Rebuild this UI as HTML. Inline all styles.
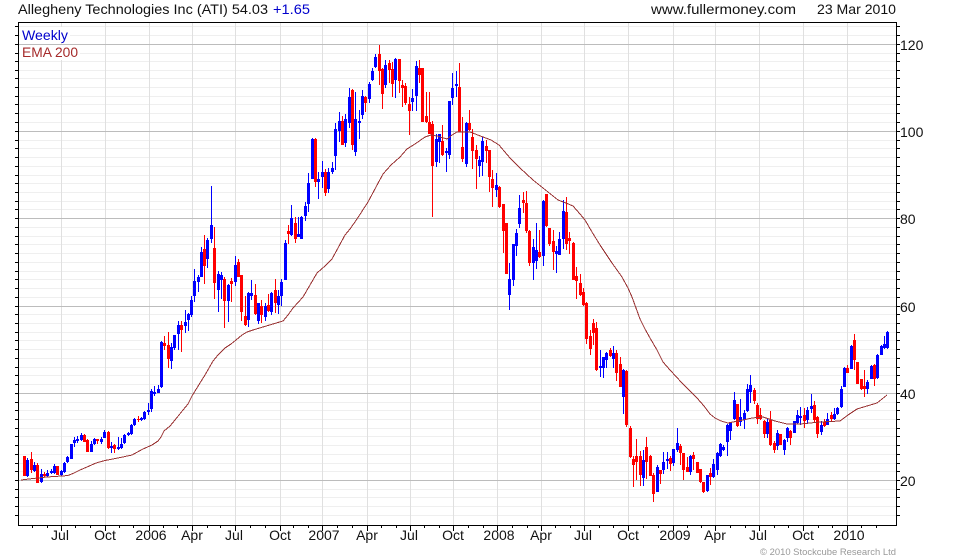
<!DOCTYPE html>
<html><head><meta charset="utf-8"><title>ATI chart</title>
<style>
html,body{margin:0;padding:0;background:#fff;width:980px;height:560px;overflow:hidden}
svg{display:block}
text{font-family:"Liberation Sans",Arial,sans-serif;font-size:14px;fill:#111}
</style></head><body>
<svg width="980" height="560" viewBox="0 0 980 560" xmlns="http://www.w3.org/2000/svg">
<g shape-rendering="crispEdges" fill="none">
<path stroke="#efefef" d="M19 26.5H896M19 35.5H896M19 53.5H896M19 61.5H896M19 70.5H896M19 78.5H896M19 87.5H896M19 96.5H896M19 104.5H896M19 113.5H896M19 122.5H896M19 140.5H896M19 148.5H896M19 157.5H896M19 166.5H896M19 175.5H896M19 183.5H896M19 192.5H896M19 201.5H896M19 209.5H896M19 227.5H896M19 236.5H896M19 244.5H896M19 253.5H896M19 262.5H896M19 271.5H896M19 279.5H896M19 288.5H896M19 297.5H896M19 314.5H896M19 323.5H896M19 332.5H896M19 340.5H896M19 349.5H896M19 358.5H896M19 367.5H896M19 375.5H896M19 384.5H896M19 402.5H896M19 410.5H896M19 419.5H896M19 428.5H896M19 436.5H896M19 445.5H896M19 454.5H896M19 463.5H896M19 471.5H896M19 489.5H896M19 497.5H896M19 506.5H896M19 515.5H896"/>
<path stroke="#e0e0e0" d="M61.5 23V525M105.5 23V525M149.5 23V525M192.5 23V525M235.5 23V525M280.5 23V525M322.5 23V525M367.5 23V525M410.5 23V525M453.5 23V525M497.5 23V525M541.5 23V525M584.5 23V525M628.5 23V525M673.5 23V525M715.5 23V525M759.5 23V525M803.5 23V525M847.5 23V525"/>
<path stroke="#bcbcbc" d="M19 44.5H896M19 131.5H896M19 218.5H896M19 306.5H896M19 393.5H896M19 480.5H896"/>
</g>
<rect x="20" y="27" width="50" height="16" fill="#fff"/>
<rect x="20" y="45" width="60" height="15" fill="#fff"/>

<g fill="none" shape-rendering="crispEdges">
<path stroke="#0000ff" stroke-width="1" d="M27.5 458V477M34.5 462V472M41.5 469V483M47.5 470V477M51.5 469V474M54.5 464V474M61.5 470V476M64.5 462V473M67.5 456V463M71.5 444V459M74.5 437V447M77.5 436V443M81.5 433V441M91.5 441V452M94.5 438V445M101.5 437V444M104.5 430V438M111.5 442V453M118.5 437V450M121.5 438V449M124.5 434V444M128.5 432V436M131.5 424V435M134.5 418V426M141.5 417V421M144.5 411V420M148.5 403V415M151.5 389V412M154.5 386V396M158.5 385V393M161.5 341V388M171.5 343V369M174.5 335V350M178.5 321V350M185.5 310V333M188.5 313V331M191.5 296V317M194.5 269V302M198.5 275V292M201.5 247V277M207.5 238V268M211.5 186V243M218.5 271V312M221.5 272V299M228.5 284V322M235.5 256V286M248.5 292V327M251.5 280V300M258.5 303V324M265.5 303V321M271.5 292V315M278.5 290V314M281.5 279V306M285.5 240V280M291.5 205V236M298.5 217V237M301.5 216V239M305.5 202V221M308.5 173V212M312.5 138V179M318.5 172V199M322.5 161V188M328.5 168V193M332.5 162V174M335.5 123V170M339.5 112V142M345.5 114V147M349.5 88V128M355.5 92V156M359.5 110V139M362.5 90V119M369.5 82V103M372.5 68V81M375.5 54V68M385.5 60V88M395.5 58V98M412.5 89V111M416.5 61V111M436.5 134V167M439.5 134V163M446.5 148V172M449.5 101V159M452.5 73V105M456.5 71V97M466.5 122V167M479.5 156V177M482.5 137V176M496.5 173V197M509.5 263V310M513.5 244V286M516.5 229V256M519.5 195V228M533.5 239V280M536.5 223V269M543.5 200V266M556.5 246V273M559.5 232V255M563.5 200V249M600.5 350V377M603.5 357V378M606.5 352V368M613.5 346V368M623.5 369V414M643.5 450V486M657.5 465V492M663.5 452V474M667.5 452V469M673.5 449V466M677.5 428V452M690.5 455V475M707.5 475V492M713.5 459V478M717.5 452V475M720.5 443V457M723.5 445V451M727.5 424V456M730.5 422V440M734.5 392V420M740.5 399V426M744.5 410V429M747.5 384V412M750.5 375V403M767.5 418V438M777.5 430V450M784.5 439V455M787.5 427V442M794.5 421V433M797.5 410V424M800.5 407V425M807.5 407V424M811.5 394V413M821.5 421V435M827.5 413V425M834.5 408V420M837.5 407V415M841.5 386V408M844.5 367V387M851.5 345V369M867.5 380V394M871.5 365V379M877.5 354V379M881.5 345V355M884.5 336V349M887.5 331V349"/>
<path stroke="#0000ff" stroke-width="3" d="M27.5 460V476M34.5 465V471M41.5 474V482M47.5 473V476M51.5 471V473M54.5 466V473M61.5 471V475M64.5 463V472M67.5 457V462M71.5 444V459M74.5 440V443M77.5 439V441M81.5 435V440M91.5 444V452M94.5 439V444M101.5 439V442M104.5 432V438M111.5 446V448M118.5 447V449M121.5 444V448M124.5 435V443M128.5 433V435M131.5 425V434M134.5 419V425M141.5 418V420M144.5 412V419M148.5 410V412M151.5 391V409M154.5 392V394M158.5 389V393M161.5 342V387M171.5 347V361M174.5 335V348M178.5 325V334M185.5 322V326M188.5 314V320M191.5 300V315M194.5 281V296M198.5 277V282M201.5 252V277M207.5 240V259M211.5 225V239M218.5 274V290M221.5 275V280M228.5 285V301M235.5 265V282M248.5 293V320M251.5 293V296M258.5 303V321M265.5 306V317M271.5 293V312M278.5 296V305M281.5 282V296M285.5 243V280M291.5 218V235M298.5 234V237M301.5 217V239M305.5 206V216M308.5 183V204M312.5 139V179M318.5 179V182M322.5 172V177M328.5 172V189M332.5 168V172M335.5 129V156M339.5 121V131M345.5 119V143M349.5 97V123M355.5 119V152M359.5 121V123M362.5 96V115M369.5 84V99M372.5 71V80M375.5 57V67M385.5 65V85M395.5 59V80M412.5 98V102M416.5 66V96M436.5 139V162M439.5 134V142M446.5 151V153M449.5 101V155M452.5 88V98M456.5 84V86M466.5 123V164M479.5 160V166M482.5 141V162M496.5 185V190M509.5 279V295M513.5 244V280M516.5 233V246M519.5 208V224M533.5 247V263M536.5 250V261M543.5 201V256M556.5 251V254M559.5 239V255M563.5 211V239M600.5 366V368M603.5 357V368M606.5 353V360M613.5 353V359M623.5 370V397M643.5 460V478M657.5 467V492M663.5 462V470M667.5 459V461M673.5 449V463M677.5 443V450M690.5 456V472M707.5 475V491M713.5 464V477M717.5 453V470M720.5 444V456M723.5 447V450M727.5 425V442M730.5 422V431M734.5 400V419M740.5 417V422M744.5 413V420M747.5 389V411M750.5 385V392M767.5 422V434M777.5 433V446M784.5 440V450M787.5 428V438M794.5 421V433M797.5 415V423M800.5 416V418M807.5 410V420M811.5 406V409M821.5 425V432M827.5 419V425M834.5 414V419M837.5 408V414M841.5 389V407M844.5 368V387M851.5 346V369M867.5 382V389M871.5 366V379M877.5 355V378M881.5 346V355M884.5 344V348M887.5 332V348"/>
<path stroke="#ff0000" stroke-width="1" d="M24.5 456V476M31.5 452V473M37.5 463V483M44.5 472V477M57.5 466V475M84.5 434V442M87.5 439V452M97.5 439V444M108.5 431V449M114.5 444V453M138.5 416V422M164.5 336V350M168.5 332V368M181.5 321V352M204.5 235V284M214.5 227V299M224.5 277V328M231.5 278V302M238.5 259V277M241.5 275V321M245.5 296V326M255.5 284V315M261.5 300V323M268.5 294V312M275.5 279V313M288.5 225V244M295.5 217V243M315.5 138V187M325.5 169V196M342.5 116V145M352.5 89V150M365.5 96V112M379.5 45V85M382.5 68V109M389.5 60V83M392.5 62V97M399.5 59V93M402.5 80V107M405.5 83V105M409.5 97V135M419.5 60V83M422.5 68V122M426.5 92V123M429.5 92V134M432.5 121V217M442.5 125V156M459.5 63V132M462.5 117V162M469.5 110V131M472.5 129V169M476.5 145V189M486.5 140V163M489.5 150V192M492.5 170V207M499.5 186V208M503.5 204V253M506.5 223V274M523.5 192V213M526.5 191V233M529.5 230V266M539.5 230V258M546.5 194V227M549.5 228V246M553.5 230V270M566.5 197V250M569.5 232V254M573.5 242V280M576.5 267V299M580.5 274V296M583.5 288V306M586.5 302V344M590.5 330V355M593.5 319V345M596.5 322V371M610.5 348V357M616.5 350V381M620.5 357V387M626.5 370V427M630.5 426V458M633.5 456V487M636.5 439V480M640.5 451V486M646.5 437V479M650.5 455V476M653.5 473V502M660.5 470V484M670.5 456V471M680.5 444V465M683.5 453V480M687.5 457V472M693.5 452V470M697.5 462V473M700.5 469V483M703.5 482V493M710.5 468V485M737.5 404V427M754.5 388V404M757.5 403V424M760.5 408V420M764.5 420V438M770.5 411V446M774.5 441V453M780.5 434V445M790.5 430V445M804.5 408V428M814.5 401V423M817.5 416V438M824.5 419V427M831.5 412V421M847.5 365V373M854.5 334V370M857.5 362V384M861.5 379V390M864.5 370V397M874.5 364V386"/>
<path stroke="#ff0000" stroke-width="3" d="M24.5 456V476M31.5 459V470M37.5 465V483M44.5 474V476M57.5 466V475M84.5 435V442M87.5 440V452M97.5 439V441M108.5 432V448M114.5 445V449M138.5 419V420M164.5 343V346M168.5 345V359M181.5 325V330M204.5 249V266M214.5 248V283M224.5 279V301M231.5 281V284M238.5 262V277M241.5 275V312M245.5 316V325M255.5 295V314M261.5 306V315M268.5 305V311M275.5 290V303M288.5 231V234M295.5 223V239M315.5 139V182M325.5 172V193M342.5 121V145M352.5 90V145M365.5 97V103M379.5 54V71M382.5 69V94M389.5 63V70M392.5 69V84M399.5 59V81M402.5 85V88M405.5 86V103M409.5 104V111M419.5 68V75M422.5 68V122M426.5 116V122M429.5 122V134M432.5 124V166M442.5 141V155M459.5 87V132M462.5 147V159M469.5 123V130M472.5 137V151M476.5 150V159M486.5 146V151M489.5 150V177M492.5 179V188M499.5 187V207M503.5 204V231M506.5 223V274M523.5 200V203M526.5 203V231M529.5 231V263M539.5 252V257M546.5 194V226M549.5 228V244M553.5 241V252M566.5 212V244M569.5 238V241M573.5 243V280M576.5 276V281M580.5 283V295M583.5 292V305M586.5 303V339M590.5 336V349M593.5 323V333M596.5 328V370M610.5 350V356M616.5 353V373M620.5 364V387M626.5 371V425M630.5 428V457M633.5 459V465M636.5 456V462M640.5 456V475M646.5 447V462M650.5 456V476M653.5 475V494M660.5 470V474M670.5 458V464M680.5 446V453M683.5 453V470M687.5 467V472M693.5 455V459M697.5 462V473M700.5 469V482M703.5 482V492M710.5 473V477M737.5 404V426M754.5 390V401M757.5 405V419M760.5 415V419M764.5 421V434M770.5 420V445M774.5 443V450M780.5 434V445M790.5 431V438M804.5 415V421M814.5 405V420M817.5 417V434M824.5 422V426M831.5 415V419M847.5 368V373M854.5 340V360M857.5 362V384M861.5 379V389M864.5 386V389M874.5 365V379"/>
</g>

<polyline fill="none" stroke="#993333" stroke-width="1" shape-rendering="crispEdges" points="21,480 33,478.5 47,477 62,476 68,475.5 74,473 80,470 87,467 96,463 105,460.5 118,458 132,455 143,449 152,445 158,441 161,437 164,431 170,426 175,420 183,410 188,404 192,396 200,383 205,375 209,368 213,361 218,355 222,351 225,348 231,344 236,340 242,335 247,332 253,330 263,327 273,324 283,321 288,315 293,308 303,297 310,285 317,273 325,266 332,259 338,248 345,235 350,229 357,219 368,202 376,187 383,174 391,165 400,157 407,149 415,144 425,137 431,135 437,136 447,139 452,135 457,132 470,132 483,137 491,140 499,145 510,158 520,168 533,180 543,188 558,200 566,203 573,206 580,214 585,220 592,232 600,245 612,263 622,277 628,288 632,297 636,308 640,319 645,329 650,338 657,350 663,362 670,370 682,383 692,393 697,398 704,406 710,414 715,418 721,421 728,423 743,420 752,418 763,417 775,421 787,424 800,424 820,422 840,421 848,415 857,409 867,406 877,403 882,399 887,395"/>

<g fill="none" stroke="#000" shape-rendering="crispEdges">
<path d="M18.5 23V526M896.5 23V526M18 22.5H897M18 525.5H897"/>
<path d="M15 26.5H18M15 35.5H18M15 44.5H18M15 53.5H18M15 61.5H18M15 70.5H18M15 78.5H18M15 87.5H18M15 96.5H18M15 104.5H18M15 113.5H18M15 122.5H18M15 131.5H18M15 140.5H18M15 148.5H18M15 157.5H18M15 166.5H18M15 175.5H18M15 183.5H18M15 192.5H18M15 201.5H18M15 209.5H18M15 218.5H18M15 227.5H18M15 236.5H18M15 244.5H18M15 253.5H18M15 262.5H18M15 271.5H18M15 279.5H18M15 288.5H18M15 297.5H18M15 306.5H18M15 314.5H18M15 323.5H18M15 332.5H18M15 340.5H18M15 349.5H18M15 358.5H18M15 367.5H18M15 375.5H18M15 384.5H18M15 393.5H18M15 402.5H18M15 410.5H18M15 419.5H18M15 428.5H18M15 436.5H18M15 445.5H18M15 454.5H18M15 463.5H18M15 471.5H18M15 480.5H18M15 489.5H18M15 497.5H18M15 506.5H18M15 515.5H18"/>
<path d="M897 26.5H900M897 35.5H900M897 44.5H900M897 53.5H900M897 61.5H900M897 70.5H900M897 78.5H900M897 87.5H900M897 96.5H900M897 104.5H900M897 113.5H900M897 122.5H900M897 131.5H900M897 140.5H900M897 148.5H900M897 157.5H900M897 166.5H900M897 175.5H900M897 183.5H900M897 192.5H900M897 201.5H900M897 209.5H900M897 218.5H900M897 227.5H900M897 236.5H900M897 244.5H900M897 253.5H900M897 262.5H900M897 271.5H900M897 279.5H900M897 288.5H900M897 297.5H900M897 306.5H900M897 314.5H900M897 323.5H900M897 332.5H900M897 340.5H900M897 349.5H900M897 358.5H900M897 367.5H900M897 375.5H900M897 384.5H900M897 393.5H900M897 402.5H900M897 410.5H900M897 419.5H900M897 428.5H900M897 436.5H900M897 445.5H900M897 454.5H900M897 463.5H900M897 471.5H900M897 480.5H900M897 489.5H900M897 497.5H900M897 506.5H900M897 515.5H900"/>
<path d="M61.5 526V531M105.5 526V531M149.5 526V531M192.5 526V531M235.5 526V531M280.5 526V531M322.5 526V531M367.5 526V531M410.5 526V531M453.5 526V531M497.5 526V531M541.5 526V531M584.5 526V531M628.5 526V531M673.5 526V531M715.5 526V531M759.5 526V531M803.5 526V531M847.5 526V531"/>
<path d="M32.5 526V528M47.5 526V528M75.5 526V528M90.5 526V528M119.5 526V528M133.5 526V528M163.5 526V528M177.5 526V528M207.5 526V528M220.5 526V528M250.5 526V528M265.5 526V528M293.5 526V528M308.5 526V528M337.5 526V528M352.5 526V528M381.5 526V528M396.5 526V528M424.5 526V528M439.5 526V528M468.5 526V528M483.5 526V528M512.5 526V528M527.5 526V528M555.5 526V528M570.5 526V528M599.5 526V528M613.5 526V528M643.5 526V528M658.5 526V528M687.5 526V528M701.5 526V528M730.5 526V528M745.5 526V528M774.5 526V528M788.5 526V528M818.5 526V528M832.5 526V528M861.5 526V528M876.5 526V528"/>
</g>

<text x="18" y="14" textLength="250" lengthAdjust="spacingAndGlyphs">Allegheny Technologies Inc (ATI) 54.03</text>
<text x="273" y="14" textLength="37" lengthAdjust="spacingAndGlyphs" style="fill:#0000cc">+1.65</text>
<text x="651" y="14" textLength="145" lengthAdjust="spacingAndGlyphs">www.fullermoney.com</text>
<text x="817" y="14" textLength="79" lengthAdjust="spacingAndGlyphs">23 Mar 2010</text>
<text x="22" y="40" textLength="46" lengthAdjust="spacingAndGlyphs" style="fill:#0000cc">Weekly</text>
<text x="22" y="57" textLength="56" lengthAdjust="spacingAndGlyphs" style="fill:#a52a2a">EMA 200</text>

<text x="900" y="50">120</text>
<text x="900" y="137">100</text>
<text x="900" y="224">80</text>
<text x="900" y="312">60</text>
<text x="900" y="399">40</text>
<text x="900" y="486">20</text>

<g text-anchor="middle">
<text x="60" y="540">Jul</text>
<text x="105" y="540">Oct</text>
<text x="151" y="540">2006</text>
<text x="192" y="540">Apr</text>
<text x="234" y="540">Jul</text>
<text x="280" y="540">Oct</text>
<text x="324" y="540">2007</text>
<text x="367" y="540">Apr</text>
<text x="409" y="540">Jul</text>
<text x="453" y="540">Oct</text>
<text x="499" y="540">2008</text>
<text x="541" y="540">Apr</text>
<text x="583" y="540">Jul</text>
<text x="628" y="540">Oct</text>
<text x="675" y="540">2009</text>
<text x="715" y="540">Apr</text>
<text x="758" y="540">Jul</text>
<text x="803" y="540">Oct</text>
<text x="849" y="540">2010</text>
</g>
<text x="760" y="555" textLength="136" lengthAdjust="spacingAndGlyphs" style="font-size:9.5px;fill:#999">© 2010 Stockcube Research Ltd</text>
</svg>
</body></html>
